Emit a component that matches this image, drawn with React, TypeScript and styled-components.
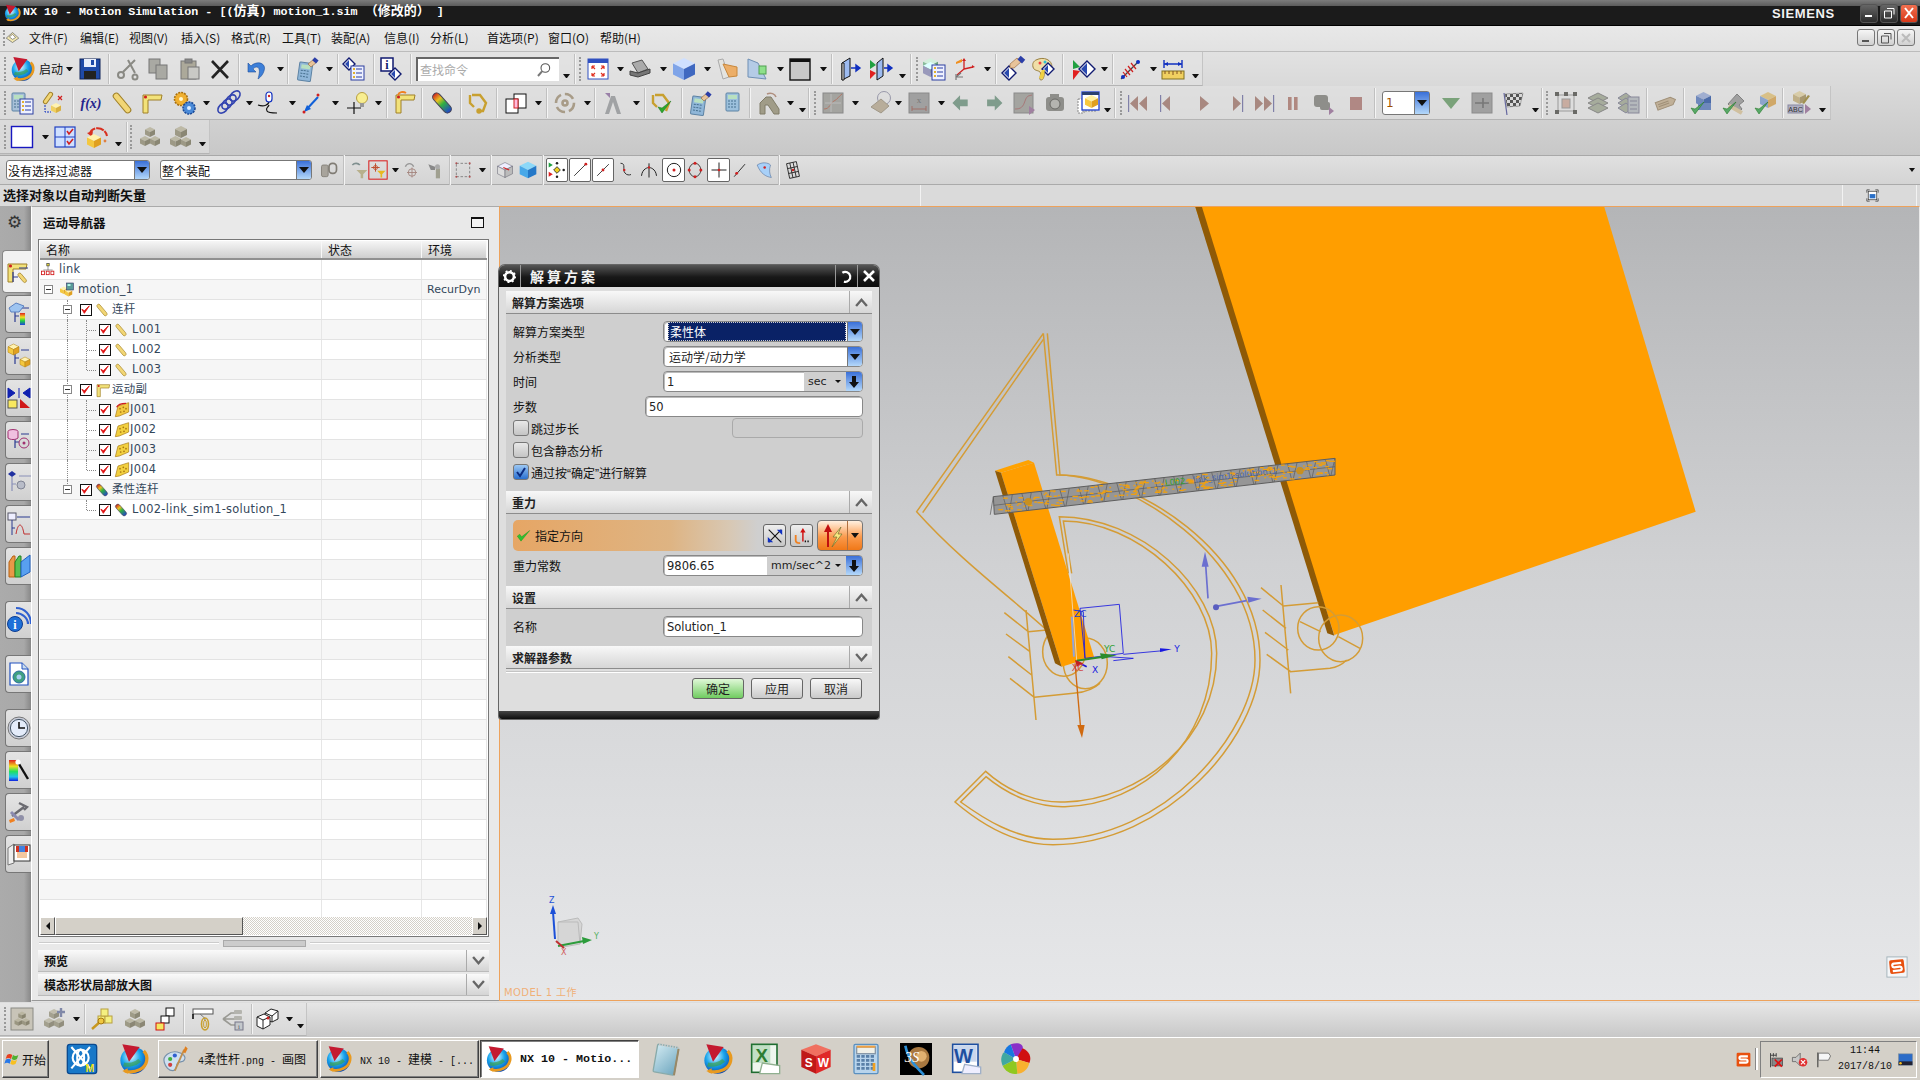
import React from 'react';
import styled, { createGlobalStyle } from 'styled-components';

const CJK = `"Noto Sans CJK SC", sans-serif`;
const UI = `"DejaVu Sans", "Noto Sans CJK SC", sans-serif`;
const MONO = `"Liberation Mono", "Noto Sans CJK SC", monospace`;

const Global = createGlobalStyle`
  html, body { margin: 0; padding: 0; background: #d4d0c8; }
  * { box-sizing: border-box; }
`;

/* ---------- icon primitives ---------- */
const Cube = ({ x = 4, y = 4, s = 16, a = '#cfe0ff', b = '#7fa4e8', c = '#3f68c0', k = 'none' }: any) => {
  const h = s / 2, q = s / 4;
  return (
    <g stroke={k} strokeWidth=".5">
      <polygon points={`${x},${y + q} ${x + h},${y} ${x + s},${y + q} ${x + h},${y + h}`} fill={a} />
      <polygon points={`${x},${y + q} ${x + h},${y + h} ${x + h},${y + s} ${x},${y + s - q}`} fill={b} />
      <polygon points={`${x + h},${y + h} ${x + s},${y + q} ${x + s},${y + s - q} ${x + h},${y + s}`} fill={c} />
    </g>
  );
};
const Bar = ({ rot = 45, fill = '#f2d675', st = '#a08028', cx = 12, cy = 12, len = 22, w = 6 }: any) => (
  <rect x={cx - w / 2} y={cy - len / 2} width={w} height={len} rx={w / 2} fill={fill} stroke={st} transform={`rotate(${rot} ${cx} ${cy})`} />
);
const Elbow = ({ c = '#f2e27a', k = '#a08028' }: any) => (
  <g><path d="M3 22V4h19l-1 5-13 0v13z" fill={c} stroke={k} /><circle cx="5.5" cy="6" r="1.6" fill="#d02020" /></g>
);
const Diamond = ({ x = 12, y = 12, r = 6 }: any) => (
  <g><polygon points={`${x},${y - r} ${x + r},${y} ${x},${y + r} ${x - r},${y}`} fill="#fff" stroke="#101a70" strokeWidth="1.4" /><polygon points={`${x},${y - r + 2} ${x},${y + r - 2} ${x - r + 2},${y}`} fill="#2a4ab0" /></g>
);
const ListLines = ({ x = 10, y = 8, w = 12, h = 14, c = '#2c3ea0' }: any) => (
  <g><rect x={x} y={y} width={w} height={h} fill="#eef1ff" stroke={c} />
    {[3, 7, 11].map(d => <g key={d}><rect x={x + 2} y={y + d - 1} width="2" height="2" fill="#e0b030" /><path d={`M${x + 5} ${y + d}h${w - 7}`} stroke={c} /></g>)}</g>
);
const Calc = ({ x = 5, y = 3, c = '#8fb6d8' }: any) => (
  <g><rect x={x} y={y} width="13" height="18" rx="1" fill={c} stroke="#5d83a4" /><rect x={x + 2} y={y + 2} width="9" height="4" fill="#b8e0c0" />
    {[8, 11, 14].map(d => <path key={d} d={`M${x + 2} ${y + d}h9`} stroke="#47708f" strokeDasharray="2 1" />)}</g>
);
const Nx = (
  <g>
    <circle cx="12.5" cy="13" r="10" fill="url(#nxg)" />
    <path d="M5 16c3 1 9 0 12-3" stroke="#3fa045" strokeWidth="3" fill="none" opacity=".65" />
    <path d="M20 6c4 4 3 11-3 14-4 2-8 2-11 1" stroke="#e89a20" strokeWidth="2.4" fill="none" />
    <path d="M8 19l-4 2 4 2z" fill="#e89a20" />
    <polygon points="4,1 17,3 9,14" fill="#c41a30" />
  </g>
);
const Boxes = (
  <g opacity=".85"><Cube x={7} y={2} s={10} a="#b8b49e" b="#938f78" c="#7d7963" /><Cube x={2} y={11} s={10} a="#b8b49e" b="#938f78" c="#7d7963" /><Cube x={12} y={11} s={10} a="#b8b49e" b="#938f78" c="#7d7963" /></g>
);
const Tree = ({ children }: any) => (
  <g><path d="M8 8v12M8 14h4M14 6h8" stroke="#2a3a90" strokeWidth="1.2" fill="none" />{children}</g>
);
const Check = ({ x = 0, y = 0, c = '#2ca82c' }: any) => (
  <path d={`M${x + 2} ${y + 14}l4 6 9-12-9 7z`} fill={c} stroke="#187018" strokeWidth=".5" />
);

const icons: Record<string, React.ReactNode> = {
  nx: Nx,
  save: <g><rect x="2" y="2" width="20" height="20" fill="#1f4aa8" stroke="#0e2358" /><rect x="6" y="2" width="12" height="8" fill="#e8eefc" /><rect x="6" y="14" width="12" height="8" fill="#222" /><rect x="13" y="3" width="3" height="5" fill="#1f4aa8" /></g>,
  scissors: <g stroke="#8a8a84" strokeWidth="2" fill="none"><path d="M20 3L8 15M13 3l7 13" /><circle cx="6" cy="18" r="3" /><circle cx="20" cy="20" r="2.5" /></g>,
  copy: <g fill="#a9a9a3" stroke="#777"><rect x="3" y="2" width="11" height="14" /><rect x="10" y="8" width="11" height="14" /></g>,
  paste: <g stroke="#777"><rect x="3" y="4" width="15" height="18" fill="#aca99a" /><rect x="7" y="2" width="7" height="4" fill="#888" /><rect x="10" y="10" width="11" height="12" fill="#c9c9c5" /></g>,
  del: <path d="M4 4l16 17M20 4L4 21" stroke="#222" strokeWidth="2.6" />,
  undo: <g><path d="M6 9c6-6 16-3 13 5-1 3-3 6-6 8 1-4 3-11-1-12-2 0-3 1-4 2l3 3H3V6z" fill="#3d7fd8" stroke="#1e4f9c" strokeWidth=".6" /></g>,
  calcHand: <g><g transform="rotate(8 12 12)"><Calc x={4} y={6} /></g><path d="M13 7l6-5 3 3-6 5z" fill="#e8c49a" stroke="#906030" strokeWidth=".6" /><rect x="18" y="1" width="5" height="4" fill="#2b3ea8" transform="rotate(40 20 3)" /></g>,
  navlist: <g><Diamond x={7} y={7} r={6} /><ListLines x={9} y={9} w={13} h={14} /></g>,
  info: <g><rect x="2" y="1" width="12" height="13" fill="#fff" stroke="#101a70" strokeWidth="1.5" /><text x="8" y="12" fontFamily="Liberation Serif" fontWeight="bold" fontSize="12" textAnchor="middle" fill="#101a70">i</text><Diamond x={16} y={17} r={6} /></g>,
  fit: <g><rect x="2" y="2" width="20" height="20" fill="#fff" stroke="#3050c0" /><rect x="2" y="2" width="20" height="4" fill="#3050c0" /><path d="M6 9l3 3M6 9h3M6 9v3M18 9l-3 3M18 9h-3M18 9v3M6 19l3-3M6 19h3M6 19v-3M18 19l-3-3M18 19h-3M18 19v-3" stroke="#e03020" strokeWidth="1.2" /></g>,
  shape: <g><polygon points="4,6 14,3 20,12 10,16" fill="#aaa" stroke="#555" /><polygon points="2,14 10,16 22,12 22,16 10,20 2,18" fill="#777" stroke="#444" /></g>,
  cube: <Cube x={1} y={1} s={22} />,
  orange: <g><polygon points="3,3 8,2 14,20 8,22" fill="#e4e4e0" stroke="#aaa" /><polygon points="8,7 22,10 22,19 14,20" fill="#ecae68" stroke="#c8883c" /></g>,
  green: <g><polygon points="3,2 13,6 21,22 3,20" fill="#b4cbe6" stroke="#6f8fb4" /><rect x="14" y="9" width="7" height="8" fill="#8de08a" stroke="#50a050" /></g>,
  blackSq: <g><rect x="2" y="2" width="20" height="21" fill="#c8c8c8" stroke="#111" strokeWidth="1.4" /><rect x="2" y="2" width="20" height="3" fill="#111" /></g>,
  book: <g><polygon points="3,6 11,1 11,19 3,23" fill="#9dbbf0" stroke="#111" /><polygon points="3,6 5,6 5,23 3,23" fill="#fff" stroke="#111" /><path d="M12 11h8m-3-3l4 3-4 3z" stroke="#1030c0" strokeWidth="1.4" fill="#1030c0" /></g>,
  book2: <g><polygon points="1,3 7,8 1,12" fill="#20a040" /><polygon points="1,13 7,16 1,22" fill="#e02020" /><polygon points="8,6 14,1 14,19 8,23" fill="#9dbbf0" stroke="#111" /><path d="M15 11h7m-3-3l4 3-4 3z" stroke="#1030c0" strokeWidth="1.4" fill="#1030c0" /></g>,
  stack: <g><Cube x={1} y={1} s={15} a="#d2efdc" b="#88bc9a" c="#6aa07e" /><Cube x={1} y={5} s={15} a="#dff" b="#99b" c="#779" /><ListLines x={10} y={8} w={13} h={15} /></g>,
  axes: <g><path d="M12 12V3M12 12l9-2M12 12l-7 6" stroke="#d02020" strokeWidth="1.3" /><path d="M12 1l-2 3h4zM23 10l-3-2v3z" fill="#d02020" /><path d="M4 5l6-3 0 3-6 2z" fill="#f09020" /><path d="M4 17v6M4 20l5-4M4 20h7" stroke="#777" strokeWidth="1.2" /></g>,
  hand: <g><Diamond x={8} y={16} r={7} /><path d="M9 7l7-6 4 4-7 6-4 0z" fill="#e8c49a" stroke="#906030" strokeWidth=".6" /><rect x="17" y="0" width="6" height="5" fill="#2b3ea8" transform="rotate(40 20 3)" /></g>,
  palette: <g><path d="M4 3c8-4 16 0 16 7 0 5-6 3-7 5-1 3-1 8-4 8s1-6-1-8-6-1-7-5 1-6 3-7z" fill="#f0dfa8" stroke="#9a8040" /><circle cx="8" cy="6" r="1.5" fill="#f04040" /><circle cx="13" cy="5" r="1.5" fill="#30c0d0" /><Diamond x={16} y={12} r={6} /><path d="M7 21l3-8 3 0-2 9z" fill="#f0d040" /></g>,
  diamondPlay: <g><polygon points="2,3 9,10 2,12" fill="#20a040" /><polygon points="2,13 9,14 2,23" fill="#e02020" /><g transform="translate(3 0)"><Diamond x={13} y={12} r={8} /></g></g>,
  antenna: <g stroke="#d02020" strokeWidth="1.2"><path d="M3 22L21 4" stroke="#444" /><path d="M7 12l5 6M10 9l5 6M13 6l5 6M5 15l4 5" /><circle cx="20" cy="5" r="2" fill="#1030c0" stroke="none" /><circle cx="5" cy="20" r="2" fill="#1030c0" stroke="none" /></g>,
  ruler: <g><path d="M3 7h18M3 3v8M21 3v8" stroke="#1030c0" strokeWidth="1.4" /><path d="M3 7l4-2v4zM21 7l-4-2v4z" fill="#1030c0" /><rect x="1" y="14" width="22" height="8" fill="#f0d060" stroke="#807020" /><path d="M4 14v3M8 14v3M12 14v4M16 14v3M20 14v3" stroke="#805020" /></g>,
  calcList: <g><Calc x={2} y={2} c="#a8c0d8" /><ListLines x={10} y={8} w={13} h={15} /></g>,
  linkx: <g><Bar rot={35} cx={7} cy={7} len={13} w={4} /><path d="M4 14v7h6" stroke="#1030c0" strokeDasharray="2 1" fill="none" /><Cube x={10} y={12} s={10} a="#fff2b0" b="#f0d060" c="#d8b040" /><path d="M17 5l4 4M21 5l-4 4" stroke="#d02020" strokeWidth="1.2" /></g>,
  fx: <text x="12" y="17" fontFamily="Liberation Serif" fontStyle="italic" fontWeight="bold" fontSize="14" textAnchor="middle" fill="#24248c">f(x)</text>,
  link: <Bar rot={-40} len={24} />,
  lshape: <Elbow />,
  gears: <g><circle cx="9" cy="8" r="6.5" fill="#f0b030" stroke="#a87010" strokeDasharray="2 1" strokeWidth="1.6" /><circle cx="9" cy="8" r="2" fill="#fff8d0" /><circle cx="17" cy="17" r="6" fill="#4a8ad8" stroke="#1a4a98" strokeDasharray="2 1" strokeWidth="1.6" /><circle cx="17" cy="17" r="2" fill="#d8ecff" /></g>,
  spring: <g fill="none" stroke="#3344b0" strokeWidth="1.6">{[5, 9, 13, 17].map(x => <ellipse key={x} cx={x + 2} cy={24 - x - 2} rx="6" ry="4" transform={`rotate(-45 ${x + 2} ${22 - x})`} />)}</g>,
  cable: <g fill="none" stroke="#111" strokeWidth="1.2"><path d="M1 14c6 2 11 0 11-4M12 14c-1 3-4 3-2 6 1 2 5 2 10 2" /><rect x="9" y="1" width="6" height="10" rx="3" fill="#fff" stroke="#1030c0" /><circle cx="12" cy="5" r="1.2" fill="#d02020" stroke="none" /></g>,
  arrowRed: <g><path d="M6 19L18 6" stroke="#1060d8" strokeWidth="2" /><path d="M4 21l3-7 4 4z" fill="#1060d8" /><circle cx="4" cy="21" r="1.5" fill="#d02020" /><circle cx="18" cy="4" r="1.5" fill="#d02020" /></g>,
  bulb: <g><path d="M2 17h14M9 11v12" stroke="#111" strokeWidth="1.2" /><circle cx="17" cy="7" r="5.5" fill="#f8ee90" stroke="#b8a040" /><rect x="15" y="12" width="4" height="4" fill="#999" /></g>,
  elbowArrow: <g><Elbow c="#f2e27a" /><path d="M5 4c1-3 5-4 8-2" fill="none" stroke="#f08020" strokeWidth="2" /></g>,
  linkColor: <g transform="rotate(-42 12 12)"><rect x="8" y="0" width="8" height="24" rx="4" fill="url(#spec)" stroke="#445" /></g>,
  chain: <g fill="none" stroke="#c8a030" strokeWidth="2.4"><path d="M5 4h8l6 8-3 8h-5M3 4v8l4 4" /><circle cx="12" cy="20" r="1.5" /></g>,
  chainCheck: <g><g fill="none" stroke="#c8a030" strokeWidth="2.4"><path d="M5 4h8l6 8-3 8M3 4v8l4 4" /></g><Check x={6} y={2} /></g>,
  squares: <g><rect x="10" y="3" width="12" height="14" fill="#fff" stroke="#111" /><rect x="2" y="8" width="12" height="14" fill="#fff" stroke="#111" /><rect x="10" y="8" width="4" height="9" fill="#fbd" stroke="#d02020" /></g>,
  grayCircle: <g fill="none" stroke="#a89c88" strokeWidth="2.6"><circle cx="12" cy="12" r="9" strokeDasharray="10 4" /><circle cx="12" cy="12" r="2.5" /></g>,
  grayY: <g fill="#a0a2a4"><path d="M3 23l6-18 4 0 6 18-4 0-4-12-4 12z" /><path d="M3 2l5 0 0 5z" fill="#9a80a8" /></g>,
  lgray: <g><path d="M3 23V12l6-6 5 0 8 12 0 5-5 0-6-9-3 0 0 9z" fill="#a09c88" stroke="#807c68" /><path d="M10 3c4-2 8 0 9 3" stroke="#b09080" strokeWidth="1.5" fill="none" /></g>,
  graph1: <g><rect x="2" y="2" width="20" height="20" fill="#a4a4a0" stroke="#888" /><path d="M3 18c6 0 6-6 10-8s4-4 8-7" stroke="#b07868" fill="none" /><path d="M4 12h16M10 3v18" stroke="#bbb" /></g>,
  tag: <g><circle cx="15" cy="7" r="6.5" fill="none" stroke="#99a" /><polygon points="2,16 12,8 20,15 12,22" fill="#b8ad9a" stroke="#a09888" /></g>,
  xbox: <g><rect x="2" y="2" width="20" height="20" fill="#a0a0a0" stroke="#8a8a8a" /><text x="12" y="12" fontSize="9" fontFamily="Liberation Serif" textAnchor="middle" fill="#777">x</text><path d="M5 18h14M5 15v5M19 15v5" stroke="#a07068" /></g>,
  arrowL: <path d="M2 12l9-9v5h9v8h-9v5z" fill="#7f9c8c" transform="scale(.85) translate(2 2)" />,
  arrowR: <path d="M22 12l-9-9v5H4v8h9v5z" fill="#7f9c8c" transform="scale(.85) translate(2 2)" />,
  graph2: <g><rect x="2" y="2" width="19" height="20" fill="#a4a4a0" stroke="#8a8a8a" /><path d="M3 18c6 0 8-2 10-8s4-5 7-6" stroke="#a87878" fill="none" /><path d="M17 15l6 4-6 5z" fill="#a080a0" /></g>,
  camera: <g fill="#8e8e8a"><rect x="3" y="6" width="18" height="14" rx="3" /><circle cx="12" cy="13" r="5" fill="#b4b4b0" stroke="#6a6a66" /><rect x="7" y="3" width="9" height="4" /></g>,
  cubePage: <g><path d="M2 8h6v14H2zM6 20h14" stroke="#888" fill="#fff" strokeDasharray="2 1" /><rect x="6" y="1" width="17" height="18" fill="#fff" stroke="#2040d0" strokeWidth="1.3" /><rect x="6" y="1" width="17" height="3" fill="#2a4070" /><Cube x={9} y={4} s={13} a="#fff0a0" b="#f8c840" c="#e0a020" /></g>,
  rewind: <g fill="#a88880"><rect x="2" y="4" width="1.2" height="17" fill="#8080a8" /><path d="M12 5L4 12.5 12 20zM21 5l-8 7.5 8 7.5z" /></g>,
  stepBack: <g fill="#a88880"><rect x="6" y="4" width="1.2" height="17" fill="#8080a8" /><path d="M16 5l-8 7.5 8 7.5z" /></g>,
  play: <path d="M8 5l9 7.5L8 20z" fill="#a88880" />,
  stepFwd: <g fill="#a88880"><rect x="17" y="4" width="1.2" height="17" fill="#8080a8" /><path d="M8 5l8 7.5L8 20z" /></g>,
  ffwd: <g fill="#a88880"><rect x="21" y="4" width="1.2" height="17" fill="#8080a8" /><path d="M3 5l8 7.5L3 20zM12 5l8 7.5L12 20z" /></g>,
  pause: <g fill="#b08880"><rect x="7" y="6" width="3.6" height="13" /><rect x="13" y="6" width="3.6" height="13" /></g>,
  camPlay: <g><g fill="#8e8e8a"><rect x="3" y="4" width="14" height="12" rx="3" /><rect x="9" y="11" width="10" height="8" rx="2" /></g><path d="M18 16l5 4-5 4z" fill="#a080a0" /></g>,
  stop: <rect x="6" y="6" width="12" height="13" fill="#b08884" />,
  tri: <path d="M3 7h18l-9 11z" fill="#7aa27a" />,
  dashsq: <g><rect x="2" y="2" width="20" height="20" fill="#a0a0a0" stroke="#8c8c8c" /><path d="M5 12h8M13 7v10M13 12h6" stroke="#777" strokeWidth="1.6" /></g>,
  flag: <g><path d="M3 2l3 22" stroke="#6668a0" strokeWidth="1.2" /><polygon points="4,3 22,2 19,15 6,16" fill="url(#chk)" stroke="#777" strokeWidth=".5" /></g>,
  net: <g><rect x="4" y="4" width="16" height="16" fill="none" stroke="#999" /><rect x="8" y="8" width="8" height="9" fill="#c8aca0" stroke="#999" />{[[1, 1], [19, 1], [1, 19], [19, 19], [10, 1]].map(([x, y]) => <rect key={x * 3 + y} x={x} y={y} width="4" height="4" fill="#6a6a66" />)}</g>,
  layers: <g stroke="#888" fill="#a6ac9c">{[4, 9, 14].map(y => <polygon key={y} points={`2,${y + 3} 12,${y - 2} 22,${y + 3} 12,${y + 8}`} />)}</g>,
  layersList: <g stroke="#889" fill="#a6ac9c">{[4, 9, 14].map(y => <polygon key={y} points={`1,${y + 3} 9,${y - 2} 15,${y + 3} 9,${y + 8}`} />)}<rect x="11" y="6" width="11" height="16" fill="#b4b8bc" /><path d="M13 10h7M13 14h7M13 18h7" /></g>,
  tagGray: <g transform="rotate(-20 12 12)"><polygon points="2,8 18,8 22,12 18,16 2,16" fill="#c0b098" stroke="#a09078" /><path d="M4 11h11M4 13h11" stroke="#a09078" /></g>,
  bv1: <g><Cube x={7} y={1} s={15} a="#a0aed0" b="#6e88bc" c="#4a6aa8" /><rect x="9" y="12" width="13" height="7" fill="#6e88bc" /><Check x={0} y={3} c="#58a868" /></g>,
  bv2: <g><path d="M7 13l9-10 7 7-5 4 3 4-3 3-6-7-2 2z" fill="#a0a0a0" stroke="#808080" /><rect x="7" y="16" width="15" height="4" fill="#d0c0a0" transform="rotate(30 14 18)" /><Check x={0} y={3} c="#58a868" /></g>,
  bv3: <g><Cube x={7} y={1} s={16} a="#d8c088" b="#8ca4cc" c="#d0a868" /><Check x={0} y={3} c="#58a868" /></g>,
  abc: <g><Cube x={5} y={0} s={13} a="#d8cca8" b="#c0b088" c="#a89870" /><path d="M14 12l6-8 2 1-6 8z" fill="#a09050" /><rect x="0" y="14" width="15" height="8" fill="#b0b0c4" stroke="#8888a0" /><text x="7.5" y="21" fontSize="7" fontFamily="Liberation Sans" textAnchor="middle" fill="#333">ABC</text><path d="M17 13l6 5-6 5z" fill="#a080a0" /></g>,
  whiteBox: <rect x="1.5" y="1.5" width="21" height="21" fill="#fff" stroke="#1818c0" strokeWidth="1.4" />,
  gridCheck: <g><rect x="2" y="2" width="20" height="20" fill="#cfe0ff" stroke="#2040c0" strokeWidth="1.2" /><path d="M12 2v20M2 12h20" stroke="#2040c0" /><path d="M14 6l2 3 4-5M14 16l2 3 4-5" stroke="#d02020" strokeWidth="1.6" fill="none" /></g>,
  rotCube: <g><path d="M5 9c1-8 15-8 17 2" fill="none" stroke="#d83020" strokeWidth="2" strokeDasharray="8 1" /><path d="M2 8l6-2-1 6z" fill="#d83020" /><Cube x={2} y={9} s={14} a="#fff2b0" b="#f4c840" c="#e0a020" /><circle cx="20" cy="16" r="1.4" fill="#e08040" /></g>,
  boxes: Boxes,
  boxes2: <g opacity=".85"><Cube x={7} y={1} s={12} a="#b8b49e" b="#938f78" c="#7d7963" /><Cube x={2} y={11} s={11} a="#b8b49e" b="#938f78" c="#7d7963" /><Cube x={13} y={12} s={10} a="#b8b49e" b="#938f78" c="#7d7963" /></g>,
  selChain: <g fill="#a8a49c" stroke="#807c74"><rect x="3" y="6" width="8" height="14" rx="2" /><rect x="12" y="4" width="9" height="12" rx="4" fill="none" strokeWidth="2" /></g>,
  selFilter: <g><path d="M4 6c3-3 7-2 9 0" stroke="#809090" strokeWidth="2" fill="none" /><polygon points="9,12 22,12 17,17 17,22 14,22 14,17" fill="#b8b08c" /></g>,
  filterRed: <g><rect x="1" y="1" width="22" height="22" fill="none" stroke="#d81818" strokeWidth="1.2" /><path d="M9 4v10M4 9h10" stroke="#c05030" strokeWidth="1.2" /><circle cx="9" cy="9" r="2.5" fill="none" stroke="#c05030" /><polygon points="11,13 21,13 17,17 17,21 15,21 15,17" fill="#e8b820" /></g>,
  target: <g stroke="#a08078" fill="none"><path d="M4 8c2-5 8-5 10 0" strokeWidth="1.6" stroke="#999" /><circle cx="12" cy="15" r="4.5" /><path d="M12 9v12M6 15h12" /></g>,
  selGray: <g fill="#888"><path d="M4 5l8 3v4H7z" /><rect x="13" y="10" width="5" height="12" fill="#a0a090" /><circle cx="15" cy="8" r="3" fill="#aaa" /></g>,
  dashBox: <g><rect x="4" y="4" width="16" height="16" fill="none" stroke="#777" strokeDasharray="3 2" />{[[4, 4], [20, 4], [4, 20], [20, 20]].map(([x, y]) => <circle key={x * 5 + y} cx={x} cy={y} r="1.2" fill="#b05050" />)}</g>,
  clip: <g><Cube x={3} y={3} s={18} a="#eef" b="#ddd" c="#bbb" k="#445" /><path d="M10 9l7 3" stroke="#d02020" strokeWidth="1.4" /></g>,
  blueCube: <Cube x={2} y={2} s={20} a="#8cd8f8" b="#48a8e8" c="#2478c8" />,
  snapPts: <g><path d="M8 12l4-4 4 4-4 4z" fill="#f0d020" stroke="#222" />{[[12, 4], [12, 20], [20, 12]].map(([x, y]) => <circle key={x + y} cx={x} cy={y} r="1.5" fill="#222" />)}<path d="M2 3l5 3-5 3z" fill="#20a040" /><path d="M2 14l5 3-5 3z" fill="#e02020" /></g>,
  lineEnd: <g><path d="M5 19L19 5" stroke="#222" /><circle cx="19" cy="5" r="1.7" fill="#d02020" /></g>,
  lineMid: <g><path d="M5 19L19 5" stroke="#222" /><circle cx="12" cy="12" r="1.7" fill="#d02020" /></g>,
  curve: <g fill="none"><path d="M6 3c8 0 2 9 6 13 2 3 6 3 8 2" stroke="#222" strokeWidth="1.2" /><circle cx="11" cy="12" r="1.6" fill="#d02020" /></g>,
  tee: <g fill="none" stroke="#222" strokeWidth="1.2"><path d="M3 19c1-9 8-10 9-10s8 1 9 10M12 4v17" /><circle cx="12" cy="9" r="1.4" fill="#d02020" stroke="none" /></g>,
  circleDot: <g fill="none"><circle cx="12" cy="12" r="8" stroke="#222" strokeWidth="1.2" /><circle cx="12" cy="12" r="1.8" fill="#d02020" /></g>,
  circleRed: <g fill="none"><ellipse cx="12" cy="12" rx="7" ry="8" stroke="#222" />{[[12, 4], [12, 20], [5, 12], [19, 12]].map(([x, y]) => <circle key={x * 2 + y} cx={x} cy={y} r="1.8" fill="#d02020" />)}</g>,
  cross: <g><path d="M12 3v18M3 12h18" stroke="#222" strokeWidth="1.2" /><circle cx="12" cy="12" r="1.6" fill="#d02020" /></g>,
  lineLow: <g><path d="M5 20L18 5" stroke="#222" strokeWidth="1.1" /><circle cx="8" cy="16" r="1.7" fill="#d02020" /></g>,
  surf: <g><path d="M5 6c6-4 13-3 16 0-2 6-1 11 1 15-7-1-13-5-17-15z" fill="#a8d0f8" stroke="#406090" strokeWidth=".6" /><circle cx="14" cy="9" r="1.5" fill="#d02020" /></g>,
  mesh: <g stroke="#222" fill="none" transform="rotate(-12 12 12)"><rect x="6" y="3" width="12" height="18" /><path d="M6 9h12M6 15h12M10 3v18M14 3v18" /><circle cx="12" cy="12" r="1.5" fill="#d02020" stroke="none" /></g>,
  viewBtn: <g><path d="M4 8V4h4M16 4h4v4M20 16v4h-4M8 20H4v-4" stroke="#333" fill="none" /><rect x="6" y="6" width="12" height="12" fill="#fff" stroke="#333" /><rect x="8" y="10" width="8" height="6" fill="#2a70c8" /></g>,
  house: <g fill="none" stroke="#555"><path d="M2 13L12 4l10 9-10 7z" fill="#f3e8b0" /><path d="M7 11l5-4 5 5-5 3z" fill="#fff" /></g>,
  winCalcDim: <g><Calc x={6} y={2} c="#9cc0dc" /></g>,
  boxDim: <g><rect x="1" y="1" width="22" height="22" fill="#c8c4b8" stroke="#8a8a84" /><g transform="translate(3 3) scale(.75)">{Boxes}</g></g>,
  gearsPlus: <g><g opacity=".9">{Boxes}</g><path d="M19 1v9M15 5h8" stroke="#8088a8" strokeWidth="2.4" /></g>,
  keyIcon: <g><rect x="8" y="9" width="7" height="7" fill="#f4f080" stroke="#b8a040" /><rect x="15" y="9" width="7" height="7" fill="#f4f080" stroke="#b8a040" /><rect x="11" y="2" width="7" height="7" fill="#f4f080" stroke="#b8a040" /><path d="M2 22l9-8" stroke="#c89820" strokeWidth="2.4" /><circle cx="11" cy="14" r="3" fill="#f0c840" stroke="#a87810" /></g>,
  chainSq: <g><rect x="13" y="1" width="8" height="8" fill="#fff" stroke="#111" /><rect x="8" y="9" width="8" height="7" fill="#fff" stroke="#111" /><rect x="3" y="16" width="8" height="7" fill="#f4e860" stroke="#d01010" /></g>,
  cable2: <g><rect x="3" y="2" width="20" height="5" fill="#fff" stroke="#555" /><path d="M3 7v5" stroke="#111" strokeWidth="1.6" /><path d="M10 7c3 3 5 3 5 6" stroke="#777" fill="none" /><ellipse cx="15" cy="17" rx="3.5" ry="6" fill="none" stroke="#c8a030" strokeWidth="1.6" /><ellipse cx="15" cy="17" rx="1.4" ry="4" fill="none" stroke="#c8a030" /></g>,
  treeDim: <g><path d="M2 12l8-6h4M2 12l8 6h4M2 12h12" stroke="#9a9a94" strokeWidth="1.6" fill="none" /><rect x="13" y="3" width="8" height="4" rx="1" fill="#b4b4ae" /><rect x="13" y="9" width="8" height="4" rx="1" fill="#b4b4ae" /><rect x="14" y="15" width="8" height="8" fill="#c4c8cc" stroke="#778" /><text x="18" y="22" fontSize="7" textAnchor="middle" fontFamily="Liberation Serif" fill="#556">i</text></g>,
  cubes: <g fill="#fff" stroke="#222"><polygon points="10,6 16,2 23,4 23,12 17,15 10,12" /><polygon points="2,10 9,7 15,10 15,18 8,22 2,19" /><path d="M2 10l6 3 7-3M8 13v9M10 6l7 3 6-5M17 9v6" fill="none" /><circle cx="13" cy="11" r="1.5" fill="#d02020" stroke="none" /></g>,
  checkGreen: <path d="M2 13l6 8L22 4 9 14 6 10z" fill="#30c030" stroke="#109010" strokeWidth=".6" />,

  /* left strip */
  t1: <g><Elbow /><g transform="translate(6 8) scale(.7)"><Bar rot={-40} cx={16} cy={14} len={16} w={5} /></g><path d="M8 12v10M8 17h5M14 8h9" stroke="#2a3a90" strokeWidth="1.2" /></g>,
  t2: <Tree><polygon points="2,6 9,1 17,4 12,10 4,10" fill="#9ec4f0" stroke="#5a80c0" /><rect x="13" y="11" width="5" height="12" fill="url(#rainbow)" /></Tree>,
  t3: <Tree><Cube x={1} y={0} s={11} a="#fff2b0" b="#f4c840" c="#e0a020" k="#b08010" /><Cube x={13} y={13} s={10} a="#fff2b0" b="#f4c840" c="#e0a020" k="#b08010" /></Tree>,
  t4: <g><path d="M1 2l7 5-7 5zM23 2l-7 5 7 5zM12 2v10" fill="#1020b0" stroke="#1020b0" /><rect x="1" y="14" width="9" height="8" fill="#f8e860" stroke="#555" /><polygon points="13,13 13,22 23,22" fill="#d01818" /></g>,
  t5: <Tree><ellipse cx="6" cy="3.5" rx="5" ry="2" fill="#f0c0e0" stroke="#a03070" /><path d="M1 4v6c2 2 8 2 10 0V4" fill="#f0c0e0" stroke="#a03070" /><circle cx="17" cy="15" r="5" fill="none" stroke="#a03070" /><circle cx="17" cy="15" r="1.5" fill="#a03070" /></Tree>,
  t6: <g><polygon points="5,1 9,4 5,7 1,4" fill="#2030a0" /><path d="M5 7v14M5 14h4M12 6h12" stroke="#8a90b8" strokeWidth="1.2" /><circle cx="14" cy="15" r="4" fill="#b8bcc8" stroke="#808494" /></g>,
  t7: <g><rect x="1" y="1" width="8" height="7" fill="#eef" stroke="#556" /><path d="M5 8v15M5 16h3M10 5h13" stroke="#2a3a90" /><path d="M9 22c2-12 6-12 8 0h6" stroke="#c03030" fill="none" /></g>,
  books: <g><polygon points="2,8 6,2 8,2 8,23 2,23" fill="#e89848" stroke="#b86010" /><polygon points="8,8 12,2 14,2 14,23 8,23" fill="#58c050" stroke="#208020" /><polygon points="14,8 23,1 23,18 14,23" fill="#58a0f0" stroke="#2060c0" /></g>,
  wifi: <g><circle cx="8" cy="16" r="7.5" fill="#1e70d8" stroke="#0e3c90" /><text x="8" y="20.5" fontFamily="Liberation Serif" fontWeight="bold" fontSize="12" textAnchor="middle" fill="#fff">i</text><path d="M9 5c6 0 12 5 12 11M9 0c9 0 15 7 15 16" stroke="#3060d0" strokeWidth="2.2" fill="none" /></g>,
  earth: <g><path d="M3 1h12l6 6v16H3z" fill="#fff" stroke="#2050c0" strokeWidth="1.2" /><path d="M15 1v6h6" fill="#cde" stroke="#2050c0" /><circle cx="12" cy="15" r="6" fill="#40a080" stroke="#2a6ca0" /><circle cx="12" cy="15" r="2.5" fill="#a8d0f0" /></g>,
  clock: <g><circle cx="12" cy="12" r="11" fill="#c8ccd8" stroke="#777" /><circle cx="12" cy="12" r="8.6" fill="#e4ecfa" stroke="#456" /><path d="M12 6v6h6" stroke="#111" strokeWidth="1.6" fill="none" /></g>,
  spectrum: <g><rect x="2" y="2" width="9" height="21" fill="url(#rainbow2)" /><path d="M12 6l9 15" stroke="#111" strokeWidth="2.4" /><circle cx="11" cy="4" r="2.6" fill="#fff" /></g>,
  tools: <g><path d="M5 16l12-9M12 3l8 4-3 3" stroke="#6a6a70" strokeWidth="2.4" fill="none" /><path d="M4 12l8 8" stroke="#8a8ab0" strokeWidth="3" /><path d="M2 20l5-2 1 3-5 2z" fill="#f08020" /><circle cx="14" cy="18" r="3" fill="#9090a8" /></g>,
  door: <g><polygon points="1,6 7,2 7,21 1,23" fill="#eee" stroke="#777" /><rect x="7" y="3" width="16" height="16" fill="#fff" stroke="#333" /><rect x="9" y="4" width="12" height="6" fill="#d03020" /><rect x="12" y="4" width="6" height="8" fill="#4080e0" /><rect x="10" y="10" width="10" height="6" fill="#f4c8a0" /></g>,

  /* tree */
  tLink: <g><rect x="10" y="1" width="4" height="4" fill="#f0e040" stroke="#222" /><path d="M12 5v7M4 12h16" stroke="#555" /><g fill="#fff" stroke="#d01010" strokeWidth="1.4"><rect x="1" y="14" width="5" height="6" /><rect x="9" y="14" width="5" height="6" /><rect x="17" y="14" width="5" height="6" /></g></g>,
  tMotion: <g><Cube x={0} y={6} s={13} a="#fff2b0" b="#f4c840" c="#e0a020" /><Cube x={8} y={10} s={13} a="#fff2b0" b="#f4c840" c="#e0a020" /><rect x="11" y="0" width="12" height="12" fill="#5a9a98" stroke="#336" /><rect x="13" y="2" width="5" height="3" fill="#bfe" /></g>,
  tJoint: <g><path d="M2 22l4-16 16-5 0 14-14 6z" fill="#f2c840" stroke="#a87810" /><path d="M4 8c2-5 8-6 14-6" stroke="#d02020" strokeWidth="2" fill="none" /><g fill="#a87810">{[[9, 10], [14, 8], [18, 10], [10, 15], [15, 14]].map(([x, y]) => <circle key={x * 3 + y} cx={x} cy={y} r="1.3" />)}</g></g>,
  tJoint2: <g><path d="M2 22l4-16 16-5 0 14-14 6z" fill="#f2d040" stroke="#a87810" /><g fill="#a87810">{[[9, 10], [14, 8], [18, 10], [10, 15], [15, 14]].map(([x, y]) => <circle key={x * 3 + y} cx={x} cy={y} r="1.3" />)}</g></g>,

  /* taskbar */
  mApp: <g><rect x="1" y="1" width="22" height="22" rx="2" fill="#1878c8" stroke="#0a4a90" /><g fill="none" stroke="#fff" strokeWidth="1.6"><circle cx="11" cy="11" r="6" /><ellipse cx="11" cy="11" rx="2.6" ry="6" /><path d="M4 3l14 16M18 3L4 19" /></g><text x="18" y="22" fontFamily="Liberation Sans" fontWeight="bold" fontSize="8" textAnchor="middle" fill="#f0e020">M</text></g>,
  paint: <g><path d="M2 15c-2-6 5-10 11-9 5 1 8 4 6 7-1 2-5 1-6 3s0 6-4 6c-3 0-6-3-7-7z" fill="#cfe0f0" stroke="#7890a8" /><circle cx="7" cy="12" r="1.8" fill="#40b040" /><circle cx="11" cy="9" r="1.8" fill="#3060d0" /><circle cx="7" cy="17" r="1.8" fill="#d04040" /><path d="M11 22l8-18" stroke="#c09050" strokeWidth="1.6" /><path d="M18 6l2-5 2 2-2 4z" fill="#e08020" /></g>,
  notepad: <g transform="rotate(10 12 12)"><rect x="4" y="2" width="16" height="21" rx="1" fill="url(#pad)" stroke="#8aa" /><path d="M20 3v20" stroke="#998866" strokeWidth="1.5" /><path d="M5 2h15" stroke="#ccc" strokeDasharray="1 1" strokeWidth="2" /></g>,
  excel: <g><rect x="2" y="1" width="19" height="21" fill="#eef6ee" stroke="#1e6c30" strokeWidth="1.2" /><rect x="2" y="1" width="14" height="14" fill="#3c9a4c" opacity=".25" /><text x="9.5" y="14" fontFamily="Liberation Sans" fontWeight="bold" fontSize="14" textAnchor="middle" fill="#2e7d32">X</text><path d="M10 15l13 2v6H8z" fill="#fff" stroke="#90b090" /></g>,
  sw: <g><polygon points="12,1 23,5 12,10 1,5" fill="#f07060" /><polygon points="1,5 12,10 12,23 1,18" fill="#c01818" /><polygon points="23,5 12,10 12,23 23,18" fill="#e02828" /><text x="6.5" y="18" fontFamily="Liberation Sans" fontWeight="bold" fontSize="9" textAnchor="middle" fill="#fff">S</text><text x="17.5" y="18" fontFamily="Liberation Sans" fontWeight="bold" fontSize="9" textAnchor="middle" fill="#fff">W</text></g>,
  winCalc: <g><rect x="3" y="1" width="18" height="22" rx="1" fill="#b8d4ec" stroke="#5a90c0" /><rect x="5" y="3" width="14" height="5" fill="#f0f0e8" stroke="#8898a8" /><rect x="5" y="2" width="14" height="1.5" fill="#f0a040" />{[10, 13, 16, 19].map(y => <path key={y} d={`M5 ${y}h14`} stroke="#5a80a8" strokeWidth="2" strokeDasharray="2.5 1" />)}<rect x="17" y="15" width="2" height="6" fill="#f0a020" /></g>,
  ds3: <g><rect width="24" height="24" fill="#000" /><circle cx="14" cy="11" r="8" fill="#a87840" /><circle cx="16" cy="10" r="4" fill="#e0b070" /><path d="M4 2c2 10 8 16 14 22" stroke="#2c90d8" strokeWidth="2" fill="none" /><text x="9" y="14" fontFamily="Liberation Serif" fontStyle="italic" fontSize="11" textAnchor="middle" fill="#fff">3S</text></g>,
  word: <g><rect x="2" y="1" width="19" height="21" fill="#fff" stroke="#1e4fa0" strokeWidth="1.2" /><rect x="3" y="2" width="17" height="12" fill="#2a60b8" opacity=".25" /><text x="10" y="15" fontFamily="Liberation Sans" fontWeight="bold" fontSize="15" textAnchor="middle" fill="#1e4fa0">W</text><path d="M11 16l12 2v5H9z" fill="#eef" stroke="#a0b0c8" /></g>,
  pin: <g><path d="M12 12L8 1c6-2 10 0 9 4z" fill="#8a30c8" /><path d="M12 12l5-8c5 2 7 7 5 11z" fill="#d01010" /><path d="M12 12l10 3c-1 5-5 8-9 8z" fill="#f8b030" /><path d="M12 12l1 11c-5 1-9-2-11-6z" fill="#90c820" /><path d="M12 12L2 17c-2-4-1-8 1-10z" fill="#40a8a0" /><path d="M12 12L3 7c1-3 3-5 5-6z" fill="#1878e0" /><circle cx="12" cy="12" r="2.2" fill="#fff" /></g>,
  winFlag: <g><path d="M3 6c3-2 5-2 8 0l-2 6c-3-2-5-2-8 0z" fill="#e84020" /><path d="M12 6c3 2 5 2 8 0l-2 6c-3 2-5 2-8 0z" fill="#50b030" /><path d="M1 13c3-2 5-2 8 0l-2 6c-3-2-5-2-8 0z" fill="#2878e8" /><path d="M10 13c3 2 5 2 8 0l-2 6c-3 2-5 2-8 0z" fill="#f8c020" /></g>,
  sogou: <g><rect x="1" y="1" width="22" height="22" rx="2" fill="#e8500f" /><path d="M19 7H8a2.5 2.5 0 0 0 0 5h8a2.5 2.5 0 0 1 0 5H5" stroke="#fff" strokeWidth="3.4" fill="none" /></g>,
  sogouNote: <g><rect x="1" y="1" width="22" height="22" fill="#f4f6f8" stroke="#a0b0b8" /><g transform="rotate(-6 12 12)"><rect x="4" y="4" width="16" height="15" rx="2" fill="#e8500f" /><path d="M17 8H9a2 2 0 0 0 0 4h6a2 2 0 0 1 0 4H7" stroke="#fff" strokeWidth="2.4" fill="none" /></g></g>,
  trayNet: <g><path d="M5 3v20M5 6h8M9 3v5M13 3v5" stroke="#444" strokeWidth="1.4" /><rect x="7" y="10" width="15" height="11" fill="#888" stroke="#444" /><path d="M11 12l10 10M21 12L11 22" stroke="#e01010" strokeWidth="2.4" /></g>,
  tray2: <g><path d="M2 9h5l6-6v18l-6-6H2z" fill="#c8c8c8" stroke="#555" /><circle cx="17" cy="16" r="6" fill="#e03030" /><path d="M14 13l6 6M20 13l-6 6" stroke="#fff" strokeWidth="1.6" /></g>,
  tray3: <g><path d="M4 2v21" stroke="#444" strokeWidth="1.6" /><path d="M5 3h14l3 4-3 6H5z" fill="#f6f6f6" stroke="#555" /></g>,
  mon: <g><rect x="1" y="3" width="22" height="18" fill="#2c6cc8" stroke="#789" /><rect x="1" y="15" width="22" height="6" fill="#223" /><circle cx="4" cy="18" r="2" fill="#f8c020" /></g>,
};

const IconSvg = styled.svg`display: block; flex: none; overflow: visible;`;
const Ic = ({ n, s = 24 }: { n: string; s?: number }) => (
  <IconSvg viewBox="0 0 24 24" width={s} height={s}>{icons[n]}</IconSvg>
);

const SharedDefs = styled.svg`position: absolute; width: 0; height: 0;`;
const Defs = () => (
  <SharedDefs>
    <defs>
      <radialGradient id="nxg" cx=".4" cy=".35" r=".7"><stop offset="0" stopColor="#e6fbff" /><stop offset=".5" stopColor="#18a4ec" /><stop offset="1" stopColor="#0a3fa8" /></radialGradient>
      <linearGradient id="spec" x1="0" y1="0" x2="0" y2="1"><stop offset="0" stopColor="#d02020" /><stop offset=".3" stopColor="#e8c020" /><stop offset=".55" stopColor="#30b040" /><stop offset="1" stopColor="#2040d0" /></linearGradient>
      <linearGradient id="rainbow" x1="0" y1="0" x2="0" y2="1"><stop offset="0" stopColor="#e02020" /><stop offset=".35" stopColor="#f0e020" /><stop offset=".65" stopColor="#20d040" /><stop offset="1" stopColor="#2040e0" /></linearGradient>
      <linearGradient id="rainbow2" x1="0" y1="0" x2="0" y2="1"><stop offset="0" stopColor="#e02020" /><stop offset=".3" stopColor="#f0e020" /><stop offset=".55" stopColor="#20e060" /><stop offset=".8" stopColor="#20c0f0" /><stop offset="1" stopColor="#1020e0" /></linearGradient>
      <linearGradient id="pad" x1="0" y1="0" x2="1" y2="1"><stop offset="0" stopColor="#cfe8f0" /><stop offset="1" stopColor="#70a8c0" /></linearGradient>
      <pattern id="chk" width="6" height="6" patternUnits="userSpaceOnUse"><rect width="6" height="6" fill="#d8d8d8" /><rect width="3" height="3" fill="#555" /><rect x="3" y="3" width="3" height="3" fill="#555" /></pattern>
    </defs>
  </SharedDefs>
);

/* ---------- toolbars ---------- */
type Item = [string, number, number?];
const place = (items: Item[], start = 0) => {
  let x = start;
  return items.map(([name, c, w]) => {
    const fixed: Record<string, number> = { sep: 1, end: 1, grip: 2, caret: 7, caretl: 7 };
    const width = w ?? fixed[name] ?? 24;
    const ml = Math.round(c - width / 2 - x);
    x = x + ml + width;
    return { name, width, ml };
  });
};

const Shell = styled.div`
  width: 1920px; height: 1080px; overflow: hidden; position: relative;
  display: flex; flex-direction: column;
  font-family: ${UI}; color: #111; background: #d4d0c8;
`;
const TitleBar = styled.div`
  height: 26px; flex: none; display: flex; align-items: center; position: relative;
  background: linear-gradient(#7c7c7c 0, #5c5c5c 6px, #1b1b1b 6px, #1b1b1b 25px, #000 25px);
  padding: 3px 2px 3px 3px; color: #fff;
`;
const TitleText = styled.div`
  font: bold 11.7px/14px ${MONO}; margin: 0 0 3px 2px; white-space: pre; flex: 1; color: #fff;
`;
const TitleCjk = styled.span`font-size: 13px; line-height: 14px;`;
const Siemens = styled.div`
  font: bold 13px "Liberation Sans", sans-serif; letter-spacing: .6px; width: 86px; color: #f2f2f2;
`;
const WinBtn = styled.div<{ $red?: boolean; $light?: boolean }>`
  width: 18px; height: ${p => (p.$light ? 17 : 19)}px; margin-left: 2px; border-radius: 3px;
  display: flex; align-items: center; justify-content: center; flex: none;
  border: 1px solid ${p => (p.$light ? '#777' : '#555')};
  background: ${p => (p.$red ? 'linear-gradient(#f07050,#d83818)' : p.$light ? 'linear-gradient(#f6f6f6,#d0d0d0)' : 'linear-gradient(#666,#2c2c2c)')};
`;
const ToolArea = styled.div`
  flex: none; height: 129px; display: flex; flex-direction: column;
  background: linear-gradient(#e8e8e8, #c8c8c8);
`;
const MenuBar = styled.div`
  height: 26px; flex: none; display: flex; align-items: center; border-bottom: 1px solid #bcbcbc;
  padding: 0 5px 2px 3px; font: 12px ${CJK}; color: #111;
`;
const MenuItem = styled.span<{ $w: number }>`width: ${p => p.$w}px; flex: none; white-space: nowrap;`;
const MenuGrip = styled.div`width: 2px; height: 16px; border-left: 2px dotted #999; flex: none;`;
const MenuHome = styled.div`width: 24px; flex: none;`;
const TRow = styled.div<{ $w: number }>`
  width: ${p => p.$w}px; height: 34px; flex: none; display: flex; align-items: center;
  background: rgba(228,228,228,.55); border-bottom: 1px solid #b4b4b4; border-right: 1px solid #c4c4c4;
`;
const Slot = styled.div<{ $w: number; $ml: number }>`
  flex: none; width: ${p => p.$w}px; margin-left: ${p => p.$ml}px;
  display: flex; align-items: center; justify-content: center; font: 12px ${CJK};
`;
const Sep = styled(Slot)`height: 30px; background: #f4f4f4; box-shadow: -1px 0 #c0c0c0;`;
const Grip = styled(Slot)`height: 24px; border-left: 2px dotted #999;`;
const Caret = styled(Slot) <{ $low?: boolean }>`
  height: 0; border-top: 4px solid #111; border-left: 3.5px solid transparent; border-right: 3.5px solid transparent;
  transform: translateY(${p => (p.$low ? 7 : 0)}px);
`;
const SearchBox = styled(Slot)`
  height: 24px; background: #fff; border-top: 2px solid #666; border-left: 2px solid #666;
  color: #aaa; font-size: 12px; justify-content: space-between; padding: 0 7px 0 2px;
`;
const MiniCombo = styled(Slot)`
  height: 24px; background: #fff; border: 1px solid #777; border-radius: 3px; justify-content: space-between;
  font: 12px ${UI}; padding-left: 3px; color: #a05000;
`;
const SelCombo = styled(Slot)`
  height: 20px; background: #fff; border: 1px solid #777; border-radius: 3px; justify-content: space-between;
  font: 12px ${CJK}; padding-left: 1px; overflow: hidden;
`;
const Boxed = styled(Slot)`height: 24px; background: #fff; border: 1px solid #666; border-radius: 2px;`;
const DropBtn = styled.div`
  width: 15px; align-self: stretch; flex: none; display: flex; align-items: center; justify-content: center;
  background: linear-gradient(#3a70d8, #b4d8fa); border-left: 1px solid #777;
  &::after { content: ''; border-top: 6px solid #111; border-left: 5px solid transparent; border-right: 5px solid transparent; }
`;

const renderItems = (items: Item[], start = 0) =>
  place(items, start).map((it, i) => {
    const k = `${it.name}${i}`;
    const p = { $w: it.width, $ml: it.ml };
    if (it.name === 'sep' || it.name === 'end') return <Sep key={k} {...p} />;
    if (it.name === 'grip') return <Grip key={k} {...p} />;
    if (it.name === 'caret') return <Caret key={k} {...p} />;
    if (it.name === 'caretl') return <Caret key={k} {...p} $low />;
    if (it.name === 'label') return <Slot key={k} {...p}>启动</Slot>;
    if (it.name === 'search') return <SearchBox key={k} {...p}>查找命令<IconSvg viewBox="0 0 24 24" width="16" height="16"><circle cx="14" cy="9" r="6.5" fill="#fff" stroke="#555" strokeWidth="1.6" /><path d="M9 14l-6 7" stroke="#777" strokeWidth="3" /></IconSvg></SearchBox>;
    if (it.name === 'num') return <MiniCombo key={k} {...p}>1<DropBtn /></MiniCombo>;
    if (it.name === 'sel1') return <SelCombo key={k} {...p}>没有选择过滤器<DropBtn /></SelCombo>;
    if (it.name === 'sel2') return <SelCombo key={k} {...p}>整个装配<DropBtn /></SelCombo>;
    if (it.name.startsWith('box:')) return <Boxed key={k} {...p}><Ic n={it.name.slice(4)} s={20} /></Boxed>;
    return <Slot key={k} {...p}><Ic n={it.name} s={it.width} /></Slot>;
  });

const row1: Item[] = [['grip', 5], ['nx', 22, 26], ['label', 51, 28], ['caret', 69], ['save', 90], ['sep', 109], ['scissors', 127], ['copy', 158], ['paste', 190], ['del', 220], ['sep', 239], ['undo', 257], ['caret', 280], ['sep', 288], ['calcHand', 307], ['caret', 329], ['sep', 338], ['navlist', 354], ['sep', 374], ['info', 391], ['sep', 411], ['search', 487, 143], ['caretl', 566], ['sep', 575], ['grip', 580], ['fit', 598], ['caret', 620], ['shape', 640], ['caret', 663], ['cube', 684], ['caret', 707], ['orange', 727], ['green', 757], ['caret', 780], ['blackSq', 800], ['caret', 823], ['sep', 832], ['book', 851], ['book2', 881], ['caretl', 902], ['sep', 911], ['grip', 917], ['stack', 934], ['axes', 964], ['caret', 987], ['sep', 996], ['hand', 1013], ['palette', 1044], ['sep', 1063], ['diamondPlay', 1083], ['caret', 1104], ['sep', 1113], ['antenna', 1130], ['caret', 1153], ['ruler', 1173], ['caretl', 1195]];
const row2: Item[] = [['grip', 5], ['calcList', 22], ['linkx', 53], ['sep', 73], ['fx', 91], ['link', 122], ['lshape', 152], ['gears', 184], ['caret', 206], ['spring', 228], ['caret', 249], ['cable', 269], ['caret', 292], ['arrowRed', 312], ['caret', 335], ['bulb', 357], ['caret', 378], ['sep', 387], ['elbowArrow', 405], ['sep', 422], ['linkColor', 442], ['sep', 461], ['chain', 479], ['sep', 497], ['squares', 516], ['caret', 538], ['sep', 547], ['grayCircle', 565], ['caret', 587], ['sep', 595], ['grayY', 614], ['caret', 636], ['sep', 645], ['chainCheck', 662], ['sep', 682], ['calcHand', 700], ['winCalcDim', 732], ['sep', 750], ['lgray', 769], ['caret', 790], ['caretl', 802], ['sep', 809], ['grip', 815], ['graph1', 833], ['caret', 855], ['tag', 881], ['caret', 898], ['xbox', 919], ['caret', 941], ['arrowL', 961], ['arrowR', 994], ['graph2', 1024], ['camera', 1055], ['cubePage', 1088], ['caretl', 1107], ['sep', 1115], ['grip', 1121], ['rewind', 1138], ['stepBack', 1166], ['play', 1204], ['stepFwd', 1237], ['ffwd', 1264], ['pause', 1293], ['camPlay', 1323], ['stop', 1356], ['sep', 1375], ['num', 1406, 48], ['tri', 1451], ['dashsq', 1482], ['flag', 1513], ['caretl', 1535], ['sep', 1542], ['grip', 1547], ['net', 1566], ['layers', 1598], ['layersList', 1629], ['sep', 1647], ['tagGray', 1666], ['sep', 1684], ['bv1', 1701], ['bv2', 1733], ['bv3', 1765], ['sep', 1783], ['abc', 1800], ['caretl', 1822]];
const row3: Item[] = [['grip', 5], ['whiteBox', 22], ['caret', 45], ['gridCheck', 65], ['rotCube', 97], ['caretl', 118], ['sep', 127], ['grip', 131], ['boxes', 150], ['boxes2', 180], ['caretl', 202]];
const selItems: Item[] = [['sel1', 78, 144], ['sel2', 236, 152], ['selChain', 329, 20], ['sep', 344], ['selFilter', 359, 20], ['filterRed', 378, 20], ['caret', 395], ['target', 412, 20], ['selGray', 435, 20], ['sep', 450], ['dashBox', 463, 20], ['caret', 482], ['sep', 491], ['clip', 505, 20], ['blueCube', 528, 20], ['sep', 543], ['box:snapPts', 557, 22], ['box:lineEnd', 580, 22], ['box:lineMid', 603, 22], ['curve', 625, 18], ['tee', 649, 20], ['box:circleDot', 673, 23], ['circleRed', 695, 20], ['box:cross', 718, 23], ['lineLow', 740, 20], ['surf', 763, 20], ['sep', 779], ['mesh', 793, 20]];
const bottomItems: Item[] = [['grip', 5], ['boxDim', 22], ['gearsPlus', 54], ['caret', 76], ['sep', 85], ['keyIcon', 102], ['boxes', 135], ['chainSq', 165], ['sep', 184], ['cable2', 202], ['treeDim', 233], ['sep', 252], ['cubes', 267], ['caret', 289], ['caretl', 300]];

const SelBar = styled.div`
  height: 30px; flex: none; display: flex; align-items: center; position: relative;
  border-top: 1px solid #a8a8a8; border-bottom: 1px solid #aaa;
  background: linear-gradient(#e0e0e0, #d4d4d4);
`;
const SelTail = styled.div`
  margin-left: auto; margin-right: 5px; border-top: 4px solid #111;
  border-left: 3.5px solid transparent; border-right: 3.5px solid transparent;
`;
const CueBar = styled.div`
  height: 21px; flex: none; display: flex; align-items: center; background: #dadada;
  font: bold 13px ${CJK}; padding-left: 3px; color: #111; white-space: nowrap;
`;
const CueCell = styled.div`
  flex: none; width: 75px; margin-right: 3px; height: 100%; border-left: 1px solid #f2f2f2; border-right: 1px solid #f2f2f2;
  display: flex; align-items: center; justify-content: center; padding-right: 14px;
`;
const CueMain = styled.div`width: 918px; flex: none; border-right: 1px solid #f2f2f2; height: 100%; display: flex; align-items: center; padding-bottom: 3px;`;

/* ---------- main ---------- */
const Main = styled.div`flex: none; height: 796px; display: flex; background: #e2e2e2;`;
const Strip = styled.div`
  width: 31px; flex: none; display: flex; flex-direction: column; align-items: flex-end;
  background: linear-gradient(90deg, #ababab 0, #a8a8a8 24px, #888 31px);
`;
const GearCell = styled.div`
  height: 44px; width: 100%; flex: none; padding: 6px 0 0 7px; font: 17px "DejaVu Sans", sans-serif; color: #333;
  line-height: 20px;
`;
const ActiveTab = styled.div`
  width: 29px; height: 43px; background: #f2f2f2; border: 1px solid #888; border-right: none;
  border-radius: 4px 0 0 4px; display: flex; align-items: center; justify-content: center; flex: none;
`;
const Tab = styled.div<{ $mt: number }>`
  width: 26px; height: 38px; margin-top: ${p => p.$mt}px; flex: none; background: linear-gradient(#e4e4e4, #d0d0d0);
  border: 1px solid #777; border-right: none; border-radius: 4px 0 0 4px;
  display: flex; align-items: center; justify-content: center;
`;
const Panel = styled.div`
  width: 468px; height: 795px; flex: none; background: #e9e9e9; border-left: 1px solid #fff;
  border-top: 1px solid #aaa; border-bottom: 1px solid #999; display: flex; flex-direction: column; padding-right: 2px;
`;
const PanelHead = styled.div`
  height: 32px; flex: none; display: flex; align-items: center; justify-content: space-between;
  padding: 0 13px 2px 3px; font: bold 12.5px ${CJK};
`;
const PanelTitle = styled.span`margin-left: 8px;`;
const MaxBox = styled.div`width: 13px; height: 11px; border: 1.5px solid #111; border-top-width: 2.5px; background: #f4f4f4;`;
const TableBox = styled.div`
  width: 451px; height: 698px; flex: none; margin-left: 6px; border: 1px solid #777; padding: 1px 1px 0;
  background: #fff; display: flex; flex-direction: column;
`;
const THead = styled.div`display: grid; grid-template-columns: 282px 100px 65px; height: 19px; flex: none; border-bottom: 2px solid #909090;`;
const TH = styled.div`
  background: linear-gradient(#f6f6f6, #cecece); border-right: 1px solid #f8f8f8;
  font: 12px/17px ${CJK}; padding-left: 6px;
`;
const TBody = styled.div`flex: 1; overflow: hidden;`;
const TR = styled.div<{ $odd: boolean }>`
  display: grid; grid-template-columns: 282px 100px 65px; height: 20px; position: relative;
  background: ${p => (p.$odd ? '#f6f6f6' : '#fff')}; border-bottom: 1px solid #e3e3e3;
`;
const TD = styled.div`
  border-right: 1px solid #e6e6e6; font: 11.4px/19px ${UI}; letter-spacing: .3px; color: #33465a; white-space: nowrap; overflow: hidden;
`;
const NameCell = styled(TD) <{ $pad: number }>`
  display: flex; align-items: center; padding-left: ${p => p.$pad}px;
`;
const EnvCell = styled(TD)`padding-left: 5px; letter-spacing: 0; font-size: 11px;`;
const Guide = styled.div<{ $x: number; $half?: boolean; $tick?: boolean }>`
  position: absolute; left: ${p => p.$x}px; top: 0; height: ${p => (p.$half ? 10 : 20)}px;
  border-left: 1px dotted #888;
  ${p => p.$tick && `&::after { content: ''; position: absolute; left: 0; top: 10px; width: 9px; border-top: 1px dotted #888; }`}
`;
const Expand = styled.div<{ $mr: number }>`
  width: 9px; height: 9px; border: 1px solid #888; background: #fff; margin-right: ${p => p.$mr}px; flex: none; position: relative; z-index: 1;
  &::after { content: ''; position: absolute; left: 1px; right: 1px; top: 3px; border-top: 1px solid #333; }
`;
const CheckBox = styled.div`
  width: 12px; height: 12px; border: 1px solid #111; background: #fff; margin-right: 3px; flex: none; position: relative; z-index: 1;
`;
const TreeIcon = styled.div<{ $mr: number }>`flex: none; margin-right: ${p => p.$mr}px;`;
const RedTick = () => (
  <IconSvg viewBox="0 0 12 12" width="10" height="10"><path d="M1 5l3 5 6-9-6 6z" fill="#e01010" stroke="#e01010" /></IconSvg>
);
const HScroll = styled.div`
  height: 18px; flex: none; display: flex; background: repeating-conic-gradient(#d4d0c8 0 25%, #fff 0 50%) 0 0 / 2px 2px;
  margin: 0 0 1px;
`;
const SBtn = styled.div<{ $dir: string }>`
  width: 15px; flex: none; background: #d4d0c8; border: 1px solid; border-color: #fff #555 #555 #fff;
  display: flex; align-items: center; justify-content: center;
  &::after { content: ''; border-top: 4px solid transparent; border-bottom: 4px solid transparent;
    ${p => (p.$dir === 'l' ? 'border-right: 4px solid #111;' : 'border-left: 4px solid #111;')} }
`;
const Thumb = styled.div`width: 188px; flex: none; background: #d4d0c8; border: 1px solid; border-color: #fff #555 #555 #fff;`;
const SpaceFill = styled.div`flex: 1;`;
const Sash = styled.div`
  height: 13px; flex: none; display: flex; align-items: center; padding: 0 0 0 7px; gap: 4px;
`;
const SashLine = styled.div<{ $w: number }>`width: ${p => p.$w}px; border-top: 1px solid #fff; box-shadow: 0 -1px #ccc; flex: none;`;
const SashGrip = styled.div`width: 83px; height: 7px; background: #ccc; border: 1px solid #aaa; flex: none;`;
const FoldHead = styled.div`
  width: 451px; margin: 0 0 2px 6px; height: 22px; flex: none; display: flex; align-items: center; justify-content: space-between;
  background: linear-gradient(#fafafa, #d4d4d4); font: bold 12px ${CJK}; padding-left: 6px; border-bottom: 1px solid #bbb;
`;
const Chev = styled.div`
  width: 23px; height: 100%; border-left: 1px solid #aaa; display: flex; align-items: center; justify-content: center; flex: none;
`;
const ChevIcon = ({ up }: { up?: boolean }) => (
  <IconSvg viewBox="0 0 14 10" width="13" height="9"><path d={up ? 'M1 9l6-7 6 7' : 'M1 1l6 7 6-7'} fill="none" stroke="#666" strokeWidth="2.6" /></IconSvg>
);

const Graphics = styled.div`
  flex: 1; height: 795px; position: relative; overflow: hidden; margin-left: 0;
  border: 1px solid #eda25c; border-right-color: #e9e9e9;
  background: linear-gradient(#b4b5b7 0, #d0d1d3 45%, #e6e7e9 100%);
`;
const ModelTag = styled.div`
  position: absolute; left: 4px; bottom: 1px; font: 10px ${UI}; color: #f0b078; letter-spacing: .4px;
`;
const FloatIcon = styled.div`position: absolute; right: 11px; bottom: 22px;`;
const SceneSvg = styled.svg`position: absolute; left: 0; top: 0; display: block;`;

/* ---------- scene (drawn in reference crop units, 3 per pixel) ---------- */
const seed = (n: number) => {
  const out: number[] = []; let v = 17;
  for (let i = 0; i < n; i++) { v = (v * 137 + 71) % 1009; out.push(v / 1009); }
  return out;
};
const W = '#d49c36';
const Scene = () => {
  const top = (t: number) => [280 + t * 1025, 530 - t * 115];
  const bot = (t: number) => [283 + t * 1022, 583 - t * 118];
  const cols = Array.from({ length: 37 }, (_, i) => i / 36);
  const rnd = seed(420);
  const wire = { fill: 'none', stroke: W, strokeWidth: 4.5 } as const;
  return (
    <SceneSvg width="1420" height="793" viewBox="-1200 -339 4260 2379">
      {/* large plate */}
      <polygon points="885,-342 2112,-342 2387,575 1303,945" fill="#ff9e00" />
      <polygon points="885,-342 905,-342 1303,947 1282,940" fill="#8f5a06" />
      {/* wireframe */}
      <path {...wire} d="M430 40L50 575C180 720 330 830 440 930M430 40L470 465C700 460 1080 700 1080 1020C1080 1250 800 1574 459 1574C340 1574 240 1510 165 1446L257 1354C330 1420 420 1450 495 1446C720 1440 950 1260 950 1000C950 800 720 590 478 590L505 760" />
      <path {...wire} d="M430 58L68 578M442 40L480 465C690 470 1065 710 1065 1020C1065 1240 790 1558 459 1558C345 1558 250 1495 182 1446L258 1370C335 1434 420 1462 495 1460C730 1455 935 1265 935 1000C935 810 710 603 490 603L515 760" />
      {/* left pin and ground */}
      <g {...wire}>
        <path d="M378 870L408 1200M313 878L385 935M318 942L390 995M325 1010L395 1065M330 1075L403 1132M385 935L440 930M403 1132L520 1120C560 1118 590 1100 600 1090" />
        <ellipse cx="492" cy="995" rx="64" ry="74" />
        <ellipse cx="556" cy="1030" rx="66" ry="76" />
      </g>
      {/* small link */}
      <polygon points="285,452 385,420 402,428 303,458" fill="#ffa200" />
      <polygon points="303,458 402,428 582,1010 485,1040" fill="#ff9e00" />
      <polygon points="285,452 303,458 485,1040 465,1030" fill="#8f5a06" />
      {/* right pin and ground */}
      <g {...wire}>
        <path d="M1143 795L1172 1120M1083 803L1150 858M1088 870L1158 925M1095 937L1165 990M1100 1003L1172 1055M1150 858L1255 848M1170 1055L1290 1045C1310 1042 1330 1030 1340 1020" />
        <ellipse cx="1255" cy="925" rx="62" ry="65" />
        <ellipse cx="1322" cy="955" rx="66" ry="70" />
        <path d="M1200 905L1262 935M1315 950L1380 985" />
      </g>
      {/* mesh bar */}
      <polygon points={`${top(0)} ${top(1)} ${bot(1)} ${bot(0)}`} fill="#969696" stroke="#5e5e5e" strokeWidth="3" />
      <g stroke="#5e5e5e" strokeWidth="2.2">
        {cols.map((t, i) => { const a = top(t), b = bot(t + (i % 2 ? .012 : -.012)); return <line key={i} x1={a[0]} y1={a[1]} x2={b[0]} y2={b[1]} />; })}
        <line x1="281" y1="556" x2="1305" y2="440" />
      </g>
      <g fill="#f0a010">
        {rnd.slice(0, 210).map((r, i) => {
          const t = rnd[(i + 210) % 420];
          const x = 285 + t * 1015, y = 530 - (x - 280) * .112 + r * 46;
          return <rect key={i} x={x} y={y} width={5 + (i % 5) * 3} height={4} />;
        })}
      </g>
      <circle cx="385" cy="545" r="11" fill="#c89020" />
      <circle cx="1200" cy="452" r="11" fill="#c89020" />
      <g transform="rotate(-6.4 800 490)" fontFamily="DejaVu Sans" fontSize="25">
        <text x="795" y="497" fill="#30a030">L002</text>
        <text x="880" y="497" fill="#4a68b0">link_sim1-solution_1</text>
      </g>
      {/* UCS */}
      <g fill="none" stroke="#1818e0" strokeWidth="2.5">
        <path d="M540 865L658 853L670 1000L555 1015ZM670 1003L790 992M520 870L550 875L555 1015M620 1010L700 1015L640 1022" />
      </g>
      <path d="M780 985L815 988L780 996Z" fill="#1818e0" />
      <path d="M505 700L530 1020" stroke="#eee" strokeWidth="2" />
      <path d="M515 890L522 1010" stroke="#90a4d8" strokeWidth="6" />
      <path d="M530 1022L625 1008" stroke="#2c8c2c" strokeWidth="6" />
      <path d="M600 1000L650 1006L605 1018Z" fill="#2c8c2c" />
      <path d="M530 1025L560 1040" stroke="#1818d0" strokeWidth="5" />
      <path d="M525 1020L550 1030L530 1040Z" fill="#c02020" />
      <path d="M525 1030L542 1225" stroke="#d06a10" strokeWidth="4" />
      <path d="M532 1215L554 1215L546 1254Z" fill="#d06a10" />
      <g fontFamily="DejaVu Sans" fontSize="27">
        <text x="522" y="890" fill="#2040d0">ZC</text>
        <text x="612" y="995" fill="#30a030">YC</text>
        <text x="515" y="1052" fill="#d04040">XC</text>
        <text x="823" y="995" fill="#1818e0">Y</text>
        <text x="576" y="1058" fill="#1818e0">X</text>
      </g>
      {/* gravity handle */}
      <path d="M924 835L916 720" stroke="#6b6fd0" strokeWidth="5" />
      <path d="M915 695L926 740L905 740Z" fill="#6b6fd0" />
      <path d="M945 860L1040 842" stroke="#6b6fd0" strokeWidth="5" />
      <path d="M1085 836L1045 848L1042 830Z" fill="#6b6fd0" />
      <circle cx="948" cy="862" r="9" fill="#5a5ec0" />
      {/* view triad, in page pixels */}
      <g transform="translate(-2700 -960) scale(3)">
        <polygon points="558,922 578,918 582,924 580,944 563,947 558,942" fill="#d6d6d6" stroke="#bbb" />
        <path d="M558 922L578 922L580 944" fill="none" stroke="#bbb" />
        <path d="M555 939L553 912" stroke="#1c50d8" strokeWidth="2" />
        <path d="M553 905L556 914L550 914Z" fill="#1c50d8" />
        <path d="M558 946L584 941" stroke="#2c9c3c" strokeWidth="2" />
        <path d="M592 940L582 937L583 944Z" fill="#2c9c3c" />
        <path d="M556 941L564 948" stroke="#c03030" strokeWidth="2" />
        <g fontFamily="DejaVu Sans" fontSize="8">
          <text x="549" y="903" fill="#1c50d8">Z</text>
          <text x="594" y="939" fill="#50b060">Y</text>
          <text x="561" y="955" fill="#d06060">X</text>
        </g>
      </g>
    </SceneSvg>
  );
};

/* ---------- dialog ---------- */
const Dialog = styled.div`
  position: absolute; left: 499px; top: 265px; width: 380px; height: 454px; border-radius: 6px 6px 3px 3px;
  background: #dedede; box-shadow: 0 0 0 1px #666; display: flex; flex-direction: column; overflow: hidden;
  font: 12px ${CJK};
`;
const DTitle = styled.div`
  height: 22px; flex: none; display: flex; align-items: center; color: #fff;
  background: linear-gradient(#565656, #181818 55%, #0c0c0c);
`;
const DGear = styled.div`width: 22px; height: 100%; display: flex; align-items: center; justify-content: center; border-right: 1px solid #999; flex: none;`;
const DName = styled.div`flex: 1; padding-left: 9px; font: bold 14px ${CJK}; letter-spacing: 3px; color: #f4f4f4;`;
const DBtn = styled.div`width: 22px; height: 100%; display: flex; align-items: center; justify-content: center; border-left: 1px solid #999; flex: none;`;
const DBody = styled.div`flex: 1; padding: 4px 7px 0 7px; display: flex; flex-direction: column;`;
const SecHead = styled.div`
  height: 23px; flex: none; display: flex; align-items: center; justify-content: space-between;
  background: linear-gradient(#f8f8f8, #d6d6d6); border-bottom: 1px solid #8c8c8c;
  font: bold 12px ${CJK}; padding-left: 6px; color: #222;
`;
const SecBody = styled.div<{ $pt: number; $pb: number }>`
  background: #cfcfcf; padding: ${p => p.$pt}px 9px ${p => p.$pb}px 7px; display: flex; flex-direction: column; flex: none;
`;
const Stack = styled.div`display: flex; flex-direction: column; gap: 4px;`;
const FRow = styled.div<{ $left?: number }>`
  height: 21px; display: grid; grid-template-columns: ${p => p.$left ?? 150}px 1fr; align-items: center; font: 12px ${CJK};
`;
const Field = styled.div`
  height: 100%; background: #fff; border: 1px solid #888; border-radius: 4px; display: flex; align-items: center;
  font: 11.5px ${UI}; padding-left: 3px; color: #222; overflow: hidden; white-space: nowrap; box-shadow: inset 1px 1px #bbb;
`;
const ComboText = styled.div<{ $sel?: boolean }>`
  flex: 1; height: 100%; display: flex; align-items: center; padding-left: 2px; font: 12px ${CJK};
  ${p => p.$sel && `background: #0a2266; color: #fff; outline: 1px dotted #ccc; outline-offset: -1px; margin: 1px;`}
`;
const Unit = styled.div<{ $w: number }>`
  width: ${p => p.$w}px; height: 100%; background: #cfcfcf; display: flex; align-items: center; justify-content: space-between;
  padding: 0 5px 0 4px; font: 11px ${UI}; flex: none;
  &::after { content: ''; border-top: 3px solid #111; border-left: 3px solid transparent; border-right: 3px solid transparent; }
`;
const Stepper = styled.div`
  width: 16px; align-self: stretch; flex: none; background: linear-gradient(#3a70d8, #b4d8fa); display: flex; align-items: center; justify-content: center;
`;
const Grow = styled.div`flex: 1;`;
const CheckRow = styled.div`height: 22px; display: flex; align-items: center; gap: 2px; font: 12px "Liberation Sans", ${CJK}; position: relative;`;
const FormCheck = styled.div<{ $on?: boolean }>`
  width: 16px; height: 16px; border-radius: 3px; border: 1px solid #777; flex: none; display: flex; align-items: center; justify-content: center;
  background: ${p => (p.$on ? 'linear-gradient(#9cc8f4,#2a70d0)' : 'linear-gradient(#e8e8e8,#c4c4c4)')};
`;
const Disabled = styled.div`
  position: absolute; right: 0; top: 1px; width: 131px; height: 20px; border: 1px solid #aaa; border-radius: 4px; background: #cdcdcd;
`;
const GravBar = styled.div`
  height: 31px; border-radius: 5px; display: flex; align-items: center; padding-left: 3px; margin-right: 0;
  background: linear-gradient(90deg, #e6a665 0, #deb483 45%, #d8c8b4 62%, #cfcfcf 70%);
  font: 12px ${CJK}; margin-bottom: 4px;
`;
const GravLabel = styled.div`flex: 1; margin-left: 4px;`;
const SmallBtn = styled.div`
  width: 23px; height: 23px; border: 1px solid #666; border-radius: 3px; margin-right: 4px; background: linear-gradient(#eee, #c6c6c6);
  display: flex; align-items: center; justify-content: center; flex: none;
`;
const OrangeBtn = styled.div`
  width: 46px; height: 31px; border: 1px solid #777; border-radius: 4px; flex: none; display: flex;
  background: linear-gradient(#fff0e0, #fb9a4c 55%, #f07818);
`;
const OrangeMain = styled.div`flex: 1; display: flex; align-items: center; justify-content: center; border-right: 1px solid #b07040;`;
const OrangeCaret = styled.div`
  width: 14px; display: flex; align-items: center; justify-content: center;
  &::after { content: ''; border-top: 5px solid #111; border-left: 4px solid transparent; border-right: 4px solid transparent; }
`;
const DFoot = styled.div`
  flex: none; margin-top: 2px; border-top: 1px solid #fff; height: 39px; display: flex; justify-content: flex-end; align-items: flex-start;
  gap: 7px; padding: 5px 10px 0 0; box-shadow: 0 -1px #c4c4c4;
`;
const FootBtn = styled.div<{ $ok?: boolean }>`
  width: 52px; height: 21px; border: 1px solid #666; border-radius: 3px; display: flex; align-items: center; justify-content: center;
  font: 12px ${CJK}; color: #222;
  background: ${p => (p.$ok ? 'linear-gradient(#e0f8d8,#70cc60)' : 'linear-gradient(#f8f8f8,#cacaca)')};
`;
const DBottom = styled.div`height: 8px; flex: none; background: linear-gradient(#444, #0c0c0c);`;

/* ---------- bottom ---------- */
const LowerTools = styled.div`
  height: 35px; flex: none; background: linear-gradient(#e6e6e6, #c8c8c8); border-top: 1px solid #ddd;
`;
const LowerRow = styled(TRow)`height: 33px;`;
const TaskBar = styled.div`
  height: 43px; flex: none; background: #d4d0c8; border-top: 1px solid #fff; display: flex; align-items: center;
`;
const StartBtn = styled.div`
  margin-left: 2px; width: 47px; height: 38px; flex: none; display: flex; align-items: center; gap: 1px; padding-left: 2px;
  border: 1px solid; border-color: #fff #404040 #404040 #fff; box-shadow: inset -1px -1px #808080;
  font: 12px ${CJK}; color: #111; white-space: nowrap;
`;
const Quick = styled.div<{ $ml: number }>`margin-left: ${p => p.$ml}px; flex: none; display: flex;`;
const TaskBtn = styled.div<{ $ml: number; $w: number; $on?: boolean }>`
  margin-left: ${p => p.$ml}px; width: ${p => p.$w}px; height: 38px; flex: none; display: flex; align-items: center; gap: 8px; padding-left: 3px;
  border: 1px solid; font: ${p => (p.$on ? 'bold 11.7px' : 'normal 10px')} ${MONO}; white-space: pre; overflow: hidden; color: #111;
  ${p => (p.$on
    ? 'background: #fff; border-color: #404040 #fff #fff #404040; box-shadow: inset 1px 1px #808080;'
    : 'border-color: #fff #404040 #404040 #fff; box-shadow: inset -1px -1px #808080;')}
`;
const TaskText = styled.span``;
const TaskCjk = styled.span`font-size: 12px;`;
const TrayLead = styled.div`margin-left: auto; flex: none;`;
const TrayDiv = styled.div`width: 2px; height: 22px; margin: 0 2px 0 5px; background: #fff; box-shadow: -1px 0 #888; flex: none;`;
const Tray = styled.div`
  width: 157px; height: 37px; margin-right: 3px; flex: none; display: flex; align-items: center; padding-left: 6px;
  border: 1px solid; border-color: #808080 #fff #fff #808080;
`;
const TrayIcon = styled.div`margin-right: 7px; flex: none;`;
const Clock = styled.div`
  width: 58px; margin-right: 4px; margin-left: -3px; flex: none; text-align: center; font: 10px/16px ${MONO}; color: #111;
`;

const menu: [string, number][] = [['文件(F)', 51], ['编辑(E)', 49], ['视图(V)', 52], ['插入(S)', 50], ['格式(R)', 51], ['工具(T)', 49], ['装配(A)', 53], ['信息(I)', 46], ['分析(L)', 57], ['首选项(P)', 61], ['窗口(O)', 52], ['帮助(H)', 50]];

type Row = { pad: number; exp?: number; chk?: boolean; ic: string; mr: number; t: string; env?: string; sz?: number; g?: [number, boolean?, boolean?][] };
const rows: Row[] = [
  { pad: 1, ic: 'tLink', mr: 4, t: 'link' },
  { pad: 4, exp: 7, ic: 'tMotion', mr: 4, t: 'motion_1', env: 'RecurDyn' },
  { pad: 23, exp: 8, chk: true, ic: 'link', mr: 3, t: '连杆', g: [[27]] },
  { pad: 59, chk: true, ic: 'link', mr: 4, t: 'L001', g: [[27], [46, false, true]] },
  { pad: 59, chk: true, ic: 'link', mr: 4, t: 'L002', g: [[27], [46, false, true]] },
  { pad: 59, chk: true, ic: 'link', mr: 4, t: 'L003', g: [[27], [46, true, true]] },
  { pad: 23, exp: 8, chk: true, ic: 'lshape', sz: 16, mr: 1, t: '运动副', g: [[27]] },
  { pad: 59, chk: true, ic: 'tJoint', sz: 16, mr: 0, t: 'J001', g: [[27], [46, false, true]] },
  { pad: 59, chk: true, ic: 'tJoint2', sz: 16, mr: 0, t: 'J002', g: [[27], [46, false, true]] },
  { pad: 59, chk: true, ic: 'tJoint2', sz: 16, mr: 0, t: 'J003', g: [[27], [46, false, true]] },
  { pad: 59, chk: true, ic: 'tJoint2', sz: 16, mr: 0, t: 'J004', g: [[27], [46, true, true]] },
  { pad: 23, exp: 8, chk: true, ic: 'linkColor', mr: 3, t: '柔性连杆', g: [[27, true]] },
  { pad: 59, chk: true, ic: 'linkColor', mr: 4, t: 'L002-link_sim1-solution_1', g: [[46, true, true]] },
];
const tabList: [string, number][] = [['t2', 2], ['t3', 4], ['t4', 4], ['t5', 4], ['t6', 4], ['t7', 4], ['books', 4], ['wifi', 16], ['earth', 16], ['clock', 16], ['spectrum', 4], ['tools', 4], ['door', 4]];

const NumText = styled.span`flex: 1;`;

const DownArrow = () => (
  <IconSvg viewBox="0 0 12 14" width="12" height="14"><path d="M4 1h4v6h3L6 13 1 7h3z" fill="#111" /></IconSvg>
);

export default function App() {
  return (
    <Shell>
      <Global />
      <Defs />
      <TitleBar>
        <Ic n="nx" s={18} />
        <TitleText>NX 10 - Motion Simulation - [(<TitleCjk>仿真</TitleCjk>) motion_1.sim <TitleCjk>（修改的）</TitleCjk> ]</TitleText>
        <Siemens>SIEMENS</Siemens>
        <WinBtn><IconSvg viewBox="0 0 12 12" width="12" height="12"><rect x="2" y="8" width="7" height="2" fill="#fff" /></IconSvg></WinBtn>
        <WinBtn><IconSvg viewBox="0 0 12 12" width="12" height="12"><path d="M4 1.5h7v6M1.5 4h7v7h-7z" fill="none" stroke="#fff" /></IconSvg></WinBtn>
        <WinBtn $red><IconSvg viewBox="0 0 12 12" width="12" height="12"><path d="M2 1l8 10M10 1L2 11" stroke="#fff" strokeWidth="2" /></IconSvg></WinBtn>
      </TitleBar>
      <ToolArea>
        <MenuBar>
          <MenuGrip />
          <MenuHome><Ic n="house" s={15} /></MenuHome>
          {menu.map(([t, w]) => <MenuItem key={t} $w={w}>{t}</MenuItem>)}
          <SpaceFill />
          <WinBtn $light><IconSvg viewBox="0 0 12 12" width="12" height="12"><rect x="2" y="8" width="7" height="2" fill="#555" /></IconSvg></WinBtn>
          <WinBtn $light><IconSvg viewBox="0 0 12 12" width="12" height="12"><path d="M4 1.5h7v6M1.5 4h7v7h-7z" fill="none" stroke="#555" /></IconSvg></WinBtn>
          <WinBtn $light><IconSvg viewBox="0 0 12 12" width="12" height="12"><path d="M2 2l8 8M10 2l-8 8" stroke="#bbb" strokeWidth="2" /></IconSvg></WinBtn>
        </MenuBar>
        <TRow $w={1203}>{renderItems(row1)}</TRow>
        <TRow $w={1831}>{renderItems(row2)}</TRow>
        <TRow $w={210}>{renderItems(row3)}</TRow>
      </ToolArea>
      <SelBar>{renderItems(selItems)}<SelTail /></SelBar>
      <CueBar>
        <CueMain>选择对象以自动判断矢量</CueMain>
        <SpaceFill />
        <CueCell><Ic n="viewBtn" s={17} /></CueCell>
      </CueBar>
      <Main>
        <Strip>
          <GearCell>⚙</GearCell>
          <ActiveTab><Ic n="t1" s={24} /></ActiveTab>
          {tabList.map(([n, m]) => <Tab key={n} $mt={m}><Ic n={n} s={24} /></Tab>)}
        </Strip>
        <Panel>
          <PanelHead><PanelTitle>运动导航器</PanelTitle><MaxBox /></PanelHead>
          <TableBox>
            <THead><TH>名称</TH><TH>状态</TH><TH>环境</TH></THead>
            <TBody>
              {Array.from({ length: 33 }, (_, i) => {
                const r = rows[i];
                return (
                  <TR key={i} $odd={i % 2 === 1}>
                    {r?.g?.map(([x, half, tick]) => <Guide key={x} $x={x} $half={half} $tick={tick} />)}
                    <NameCell $pad={r?.pad ?? 0}>
                      {r?.exp !== undefined && <Expand $mr={r.exp} />}
                      {r?.chk && <CheckBox><RedTick /></CheckBox>}
                      {r && <TreeIcon $mr={r.mr}><Ic n={r.ic} s={r.sz ?? 14} /></TreeIcon>}
                      {r?.t}
                    </NameCell>
                    <TD />
                    <EnvCell>{r?.env}</EnvCell>
                  </TR>
                );
              })}
            </TBody>
            <HScroll><SBtn $dir="l" /><Thumb /><SpaceFill /><SBtn $dir="r" /></HScroll>
          </TableBox>
          <Sash><SashLine $w={180} /><SashGrip /><SashLine $w={180} /></Sash>
          <FoldHead>预览<Chev><ChevIcon /></Chev></FoldHead>
          <FoldHead>模态形状局部放大图<Chev><ChevIcon /></Chev></FoldHead>
        </Panel>
        <Graphics>
          <Scene />
          <ModelTag>MODEL 1 工作</ModelTag>
          <FloatIcon><Ic n="sogouNote" s={22} /></FloatIcon>
        </Graphics>
      </Main>
      <LowerTools>
        <LowerRow $w={307}>{renderItems(bottomItems)}</LowerRow>
      </LowerTools>
      <TaskBar>
        <StartBtn><Ic n="winFlag" s={16} />开始</StartBtn>
        <Quick $ml={17}><Ic n="mApp" s={32} /></Quick>
        <Quick $ml={19}><Ic n="nx" s={32} /></Quick>
        <TaskBtn $ml={9} $w={160}><Ic n="paint" s={28} /><TaskText>4<TaskCjk>柔性杆</TaskCjk>.png - <TaskCjk>画图</TaskCjk></TaskText></TaskBtn>
        <TaskBtn $ml={2} $w={159}><Ic n="nx" s={28} /><TaskText>NX 10 - <TaskCjk>建模</TaskCjk> - [...</TaskText></TaskBtn>
        <TaskBtn $ml={1} $w={159} $on><Ic n="nx" s={28} /><TaskText>NX 10 - Motio...</TaskText></TaskBtn>
        <Quick $ml={11}><Ic n="notepad" s={32} /></Quick>
        <Quick $ml={19}><Ic n="nx" s={32} /></Quick>
        <Quick $ml={16}><Ic n="excel" s={32} /></Quick>
        <Quick $ml={19}><Ic n="sw" s={32} /></Quick>
        <Quick $ml={18}><Ic n="winCalc" s={32} /></Quick>
        <Quick $ml={18}><Ic n="ds3" s={32} /></Quick>
        <Quick $ml={18}><Ic n="word" s={32} /></Quick>
        <Quick $ml={18}><Ic n="pin" s={32} /></Quick>
        <TrayLead><Ic n="sogou" s={15} /></TrayLead>
        <TrayDiv />
        <Tray>
          <TrayIcon><Ic n="trayNet" s={17} /></TrayIcon>
          <TrayIcon><Ic n="tray2" s={17} /></TrayIcon>
          <TrayIcon><Ic n="tray3" s={17} /></TrayIcon>
          <Clock>11:44<br />2017/8/10</Clock>
          <Ic n="mon" s={15} />
        </Tray>
      </TaskBar>
      <Dialog>
        <DTitle>
          <DGear><IconSvg viewBox="0 0 24 24" width="15" height="15"><circle cx="12" cy="12" r="7" fill="none" stroke="#fff" strokeWidth="4" /><circle cx="12" cy="12" r="9" fill="none" stroke="#fff" strokeWidth="3" strokeDasharray="3 4" /></IconSvg></DGear>
          <DName>解算方案</DName>
          <DBtn><IconSvg viewBox="0 0 14 14" width="14" height="14"><path d="M3 3a5 5 0 1 1 0 9" fill="none" stroke="#fff" strokeWidth="2.2" transform="rotate(-10 7 7)" /></IconSvg></DBtn>
          <DBtn><IconSvg viewBox="0 0 14 14" width="14" height="14"><path d="M2 2l10 10M12 2L2 12" stroke="#fff" strokeWidth="2.6" /></IconSvg></DBtn>
        </DTitle>
        <DBody>
          <SecHead>解算方案选项<Chev><ChevIcon up /></Chev></SecHead>
          <SecBody $pt={7} $pb={8}>
            <Stack>
              <FRow>解算方案类型<Field><ComboText $sel>柔性体</ComboText><DropBtn /></Field></FRow>
              <FRow>分析类型<Field><ComboText>运动学/动力学</ComboText><DropBtn /></Field></FRow>
              <FRow>时间<Field><NumText>1</NumText><Unit $w={42}>sec</Unit><Stepper><DownArrow /></Stepper></Field></FRow>
              <FRow $left={132}>步数<Field>50</Field></FRow>
            </Stack>
            <CheckRow><FormCheck />跳过步长<Disabled /></CheckRow>
            <CheckRow><FormCheck />包含静态分析</CheckRow>
            <CheckRow>
              <FormCheck $on><IconSvg viewBox="0 0 12 12" width="12" height="12"><path d="M2 6l3 4 5-8" fill="none" stroke="#0c2c80" strokeWidth="2" /></IconSvg></FormCheck>
              通过按“确定”进行解算
            </CheckRow>
          </SecBody>
          <SecHead>重力<Chev><ChevIcon up /></Chev></SecHead>
          <SecBody $pt={6} $pb={10}>
            <GravBar>
              <Ic n="checkGreen" s={15} />
              <GravLabel>指定方向</GravLabel>
              <SmallBtn><IconSvg viewBox="0 0 20 20" width="18" height="18"><path d="M3 17L17 3" stroke="#111" strokeWidth="1.2" /><path d="M3 3l14 14" stroke="#111" strokeWidth="1.2" /><path d="M12 3h6v6zM8 17H2v-6z" fill="#1030c0" /></IconSvg></SmallBtn>
              <SmallBtn><IconSvg viewBox="0 0 20 20" width="18" height="18"><path d="M11 16V5" stroke="#d01010" strokeWidth="1.6" /><path d="M11 1l3 5H8z" fill="#d01010" /><path d="M3 9v6c0 2 2 3 5 3" stroke="#f08020" strokeWidth="2" fill="none" /><path d="M13 16h6" stroke="#111" strokeWidth="2" strokeDasharray="1.5 1.5" /></IconSvg></SmallBtn>
              <OrangeBtn>
                <OrangeMain><IconSvg viewBox="0 0 26 26" width="26" height="26"><path d="M8 24V8" stroke="#c01010" strokeWidth="2" /><path d="M8 1l4 8H4z" fill="#c01010" /><path d="M21 4l-8 10h4l-5 10 10-13h-4z" fill="#f8e880" stroke="#707030" strokeWidth=".7" /></IconSvg></OrangeMain>
                <OrangeCaret />
              </OrangeBtn>
            </GravBar>
            <FRow>重力常数<Field>9806.65<Grow /><Unit $w={79}>mm/sec^2</Unit><Stepper><DownArrow /></Stepper></Field></FRow>
          </SecBody>
          <SecHead>设置<Chev><ChevIcon up /></Chev></SecHead>
          <SecBody $pt={7} $pb={9}>
            <FRow>名称<Field>Solution_1</Field></FRow>
          </SecBody>
          <SecHead>求解器参数<Chev><ChevIcon /></Chev></SecHead>
          <Grow />
          <DFoot>
            <FootBtn $ok>确定</FootBtn>
            <FootBtn>应用</FootBtn>
            <FootBtn>取消</FootBtn>
          </DFoot>
        </DBody>
        <DBottom />
      </Dialog>
    </Shell>
  );
}
